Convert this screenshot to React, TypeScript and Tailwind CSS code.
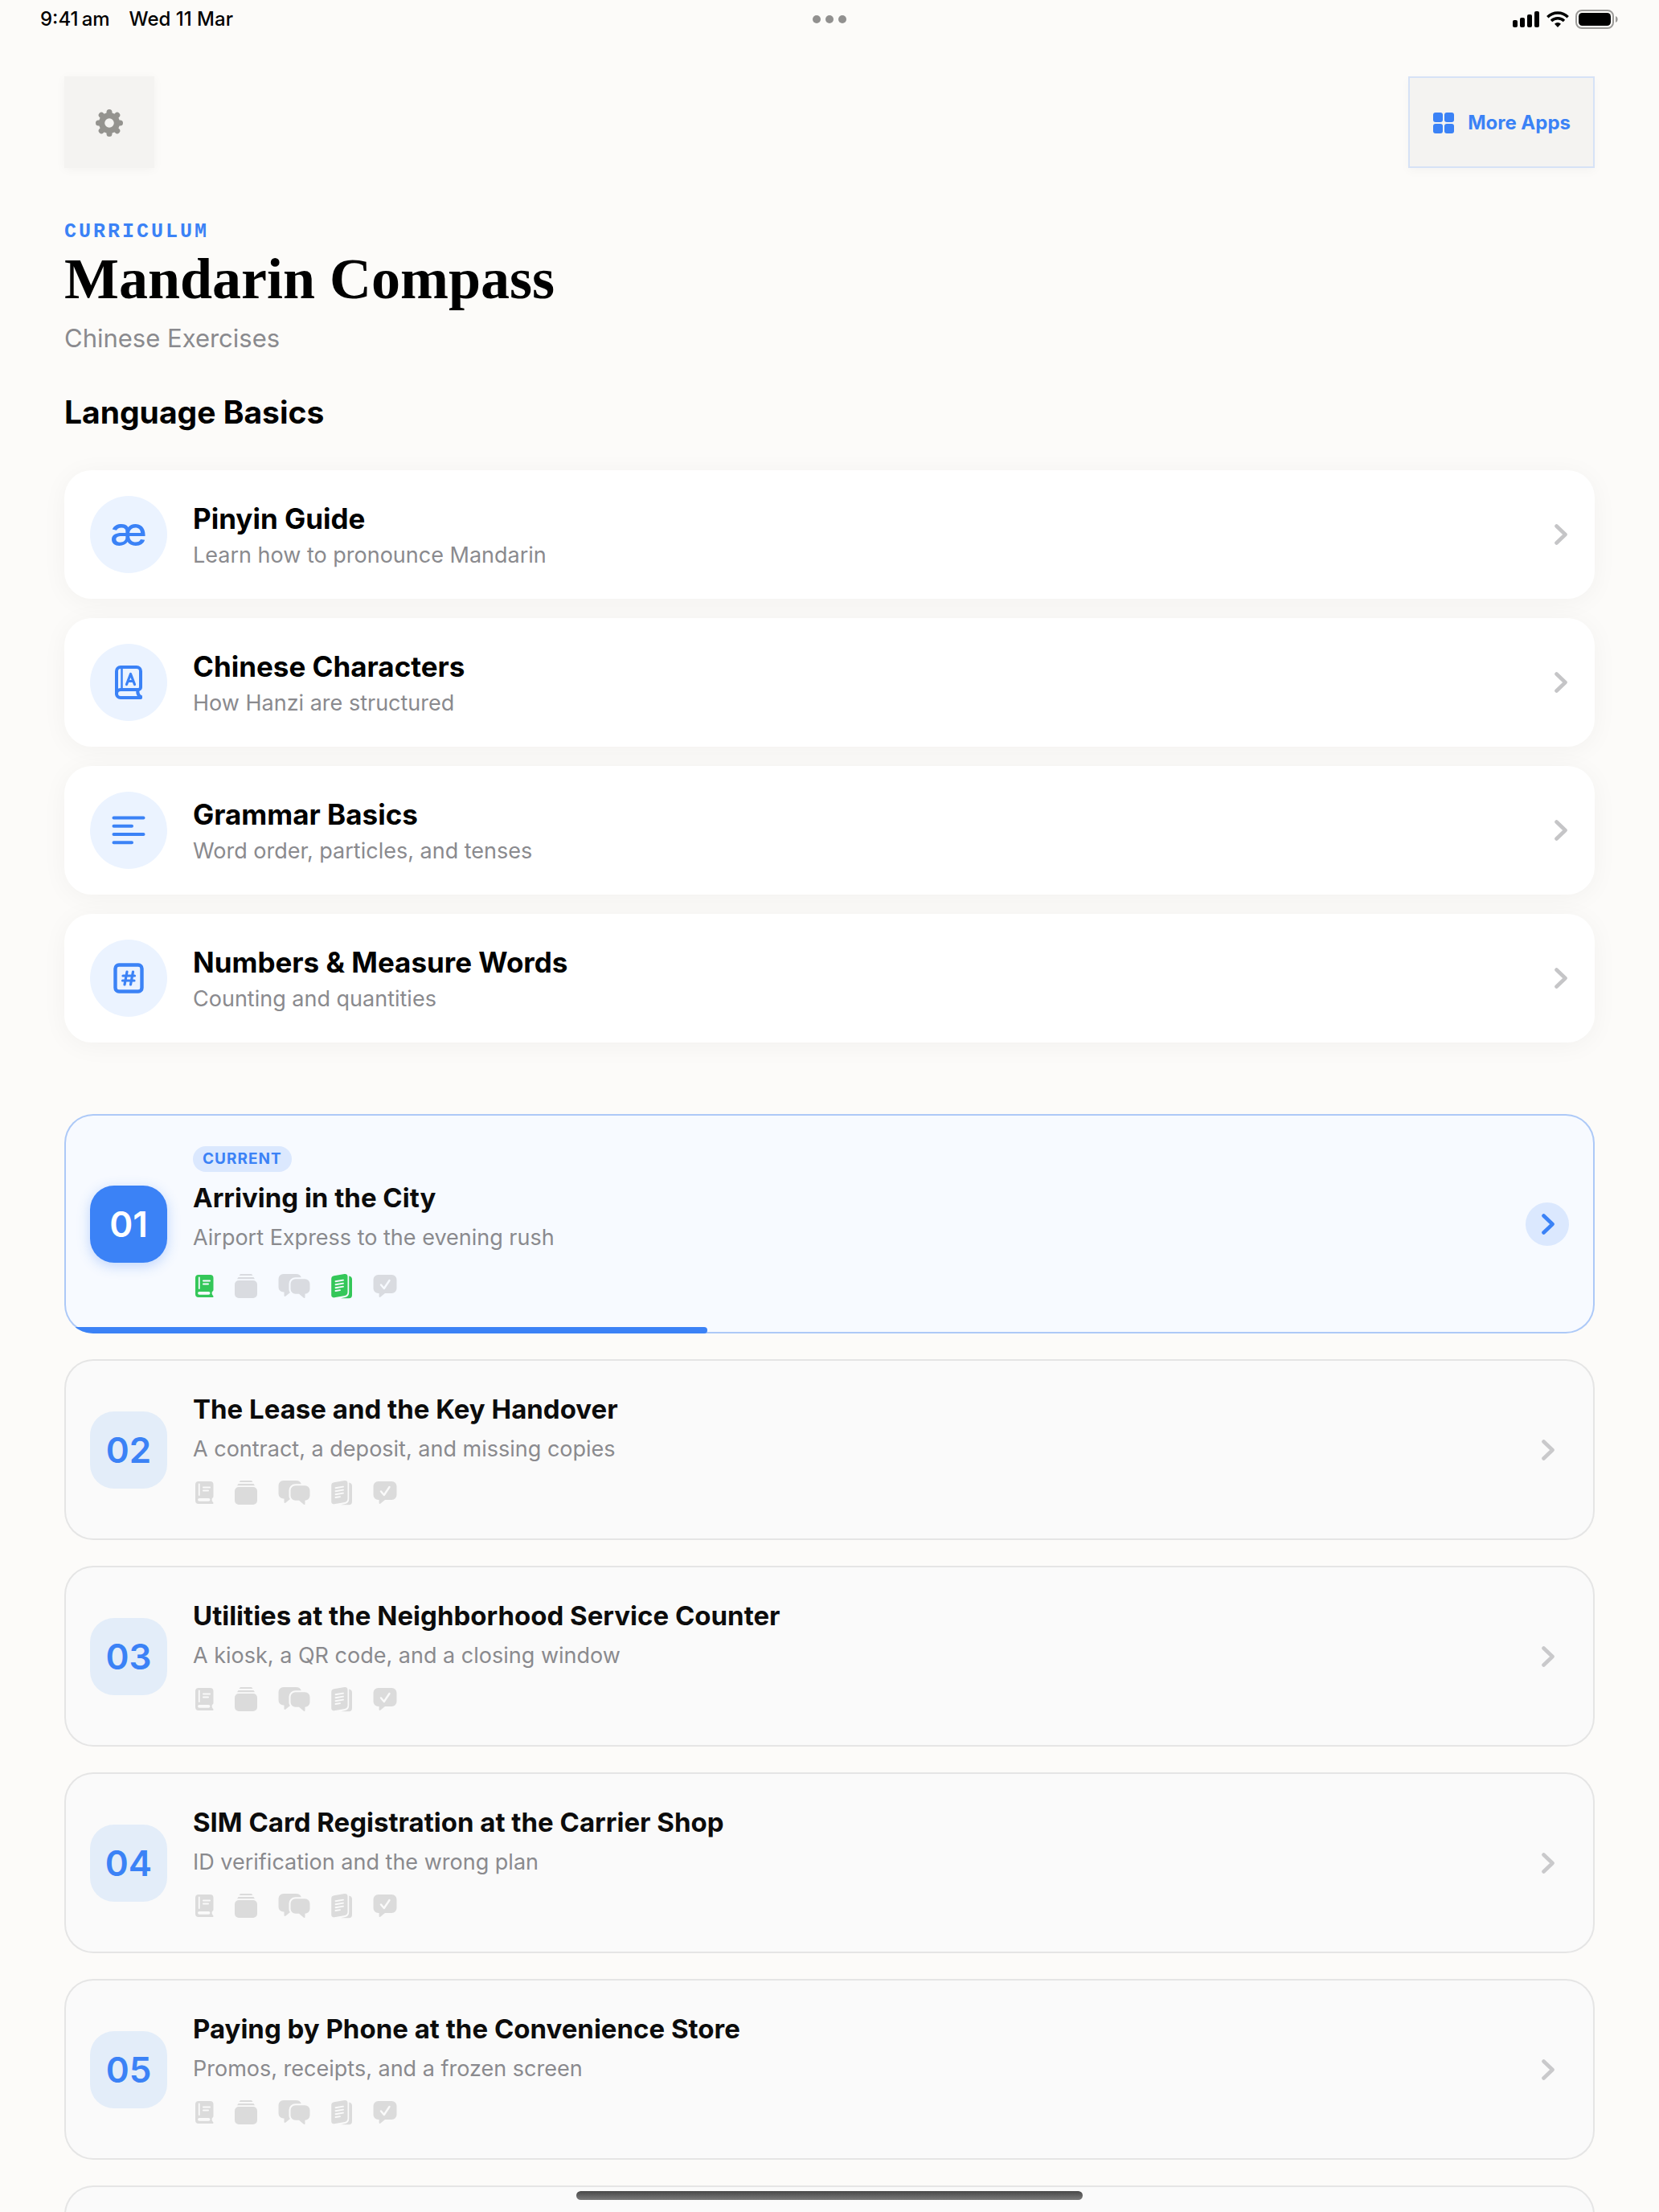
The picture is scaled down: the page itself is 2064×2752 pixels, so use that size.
import type { ReactNode } from 'react'

const basics = [
  { icon: <PhonemeIcon />, title: 'Pinyin Guide', text: 'Learn how to pronounce Mandarin' },
  { icon: <CharacterBookIcon />, title: 'Chinese Characters', text: 'How Hanzi are structured' },
  { icon: <LinesIcon />, title: 'Grammar Basics', text: 'Word order, particles, and tenses' },
  { icon: <NumberIcon />, title: 'Numbers & Measure Words', text: 'Counting and quantities' },
]

type Lesson = {
  number: string
  title: string
  text: string
  progress?: number
  done?: string[]
}

const lessons: Lesson[] = [
  { number: '01', title: 'Arriving in the City', text: 'Airport Express to the evening rush', progress: 42, done: ['book', 'story'] },
  { number: '02', title: 'The Lease and the Key Handover', text: 'A contract, a deposit, and missing copies' },
  { number: '03', title: 'Utilities at the Neighborhood Service Counter', text: 'A kiosk, a QR code, and a closing window' },
  { number: '04', title: 'SIM Card Registration at the Carrier Shop', text: 'ID verification and the wrong plan' },
  { number: '05', title: 'Paying by Phone at the Convenience Store', text: 'Promos, receipts, and a frozen screen' },
]

function PhonemeIcon() {
  return <span className="pb-2 text-[50px] leading-none font-medium">æ</span>
}

function CharacterBookIcon() {
  return (
    <svg width="34" height="42" viewBox="0 0 34 42" fill="none" stroke="currentColor" strokeLinecap="round" strokeLinejoin="round">
      <path d="M32 38.500V40H7a5 5 0 0 1-5-5V7a5 5 0 0 1 5-5h20a5 5 0 0 1 5 5v20a3 3 0 0 1-3 3c-1.500 3-1 6 3 10" strokeWidth="4" />
      <path d="M2 35a5 5 0 0 1 5-5h22" strokeWidth="4" />
      <path d="M8.500 3v26" strokeWidth="2.500" />
      <path d="M14.500 23.500 19.500 10.500 24.500 23.500M16.300 19.500h6.400" strokeWidth="3.200" />
    </svg>
  )
}

function LinesIcon() {
  return (
    <svg width="42" height="36" viewBox="0 0 42 36" fill="none" stroke="currentColor" strokeWidth="4" strokeLinecap="round">
      <path d="M2.500 2.500h37M2.500 12.800h22.500M2.500 23h37M2.500 33.300h22.500" />
    </svg>
  )
}

function NumberIcon() {
  return (
    <svg width="38" height="38" viewBox="0 0 38 38" fill="none" stroke="currentColor" strokeLinecap="round">
      <rect x="2.500" y="2.500" width="33" height="33" rx="4.500" strokeWidth="4.400" />
      <path d="M17 11l-3 16M24.500 11l-3 16M12 16h14.500M11.500 22h14.500" strokeWidth="3.200" />
    </svg>
  )
}

function Chevron({ className = '' }: { className?: string }) {
  return (
    <svg className={className} width="16" height="26" viewBox="0 0 16 26" fill="none" stroke="currentColor" strokeWidth="4.600" strokeLinecap="round" strokeLinejoin="round">
      <path d="M2.500 2.500 13.500 13 2.500 23.500" />
    </svg>
  )
}

/* The cut-out strokes take the colour of the card behind them. */
function LessonIcons({ done, cut }: { done: string[]; cut: string }) {
  const tone = (key: string) => (done.includes(key) ? 'text-[#34c759]' : '')
  return (
    <div className="flex h-8 items-center gap-[26px] pl-0.5 text-black/12">
      <svg className={tone('book')} width="24" height="30" viewBox="0 0 24 30" fill="currentColor">
        <path d="M5 1h14.500A4 4 0 0 1 23.500 5v14.500c0 1-.5 2-1.500 2.500-.8 2-.4 3.500 1.200 5.200.8.800.3 1.800-.7 1.800H5A4 4 0 0 1 1 25V5a4 4 0 0 1 4-4Z" />
        <g className={cut} fill="none" strokeLinecap="round">
          <path d="M5.800 4.500v13.500" strokeWidth="1.800" />
          <path d="M11 8.500h8M11 12.500h6" strokeWidth="2" />
          <path d="M6 23.800h11.500" strokeWidth="3.800" />
        </g>
      </svg>
      <svg width="28" height="30" viewBox="0 0 28 30" fill="currentColor">
        <path d="M7 0h14l1.500 2h-17ZM4.500 4h19l1.500 2.200H3ZM5 8h18a5 5 0 0 1 5 5v12a5 5 0 0 1-5 5H5a5 5 0 0 1-5-5V13a5 5 0 0 1 5-5Z" />
      </svg>
      <svg width="40" height="30" viewBox="0 0 40 30" fill="currentColor">
        <path d="M6.500 0h16c3 0 5.500 1.500 6.300 4.200H21.500a8 8 0 0 0-8 8v6.300c0 2.200.5 3.500 1.500 4.500L9.500 27.500c-1 .8-2 .4-2-.8v-4.200H6.500A6 6 0 0 1 .5 16.500V6a6 6 0 0 1 6-6Z" />
        <path d="M21.500 6.200h12a6 6 0 0 1 6 6v6.600a6 6 0 0 1-6 6v4.200c0 1.200-1 1.400-1.900.6L26 24.800h-4.500a6 6 0 0 1-6-6v-6.600a6 6 0 0 1 6-6Z" />
      </svg>
      <svg className={tone('story')} width="26" height="32" viewBox="0 0 26 32" fill="currentColor">
        <path d="M3.500 3.300 16.500 1c2.200-.4 4 .8 4 3v19.500c0 2.500-1.300 4-3.500 4.500L4 30.300c-2.200.4-3.800-.8-3.800-3V7.300c0-2.200 1.100-3.600 3.300-4Z" />
        <path d="M22.200 3.500c2.300.3 3.800 1.700 3.800 4v19.800c0 2.600-1.300 4-3.800 4H12l5.500-1.300c3-.7 4.700-2.800 4.700-6Z" />
        <g className={cut} fill="none" strokeLinecap="round" strokeWidth="1.900">
          <path d="m5.500 10.200 9.500-1.600M5.500 14.200l9.500-1.600M5.500 18.200l9.500-1.600M5.500 22l5.500-.9" />
        </g>
      </svg>
      <svg width="30" height="28" viewBox="0 0 30 28" fill="currentColor">
        <path d="M6.500 0h17a6 6 0 0 1 6 6v11a6 6 0 0 1-6 6H15l-5.500 4.500c-1 .8-1.900.4-1.900-.8V23H6.500a6 6 0 0 1-6-6V6a6 6 0 0 1 6-6Z" />
        <path className={cut} d="m10 12.500 3.800 4.500L20.500 7" fill="none" strokeWidth="2.400" strokeLinecap="round" strokeLinejoin="round" />
      </svg>
    </div>
  )
}

function StatusBar() {
  return (
    <div className="grid h-12 grid-cols-3 items-center px-[50px]">
      <div className="flex gap-6 text-[24px] font-medium">
        <span>9:41&#8201;am</span>
        <span>Wed 11 Mar</span>
      </div>
      <div className="flex justify-center gap-1.5">
        <span className="size-2.5 rounded-full bg-[#91908f]" />
        <span className="size-2.5 rounded-full bg-[#91908f]" />
        <span className="size-2.5 rounded-full bg-[#91908f]" />
      </div>
      <div className="flex items-center justify-end gap-2">
        <svg width="34" height="20" viewBox="0 0 34 20">
          <rect x="0" y="11" width="6" height="9" rx="2" />
          <rect x="9" y="8" width="6" height="12" rx="2" />
          <rect x="18" y="4" width="6" height="16" rx="2" />
          <rect x="27" y="0" width="6" height="20" rx="2" />
        </svg>
        <svg width="28" height="20" viewBox="0 0 28 20" fill="none" stroke="currentColor" strokeWidth="3.400">
          <path d="M1.300 7.200a18.200 18.200 0 0 1 25.400 0M6 12a11.500 11.500 0 0 1 16 0" />
          <path d="M14 20l-4-4.200a5.600 5.600 0 0 1 8 0Z" fill="currentColor" stroke="none" />
        </svg>
        <svg width="54" height="24" viewBox="0 0 54 24">
          <rect x="1" y="1" width="46" height="22" rx="7" fill="none" stroke="#9b9a98" strokeWidth="2" />
          <rect x="4" y="4" width="40" height="16" rx="4.500" />
          <path d="M50 8c3.500 1.300 3.500 6.700 0 8Z" fill="#9b9a98" />
        </svg>
      </div>
    </div>
  )
}

function BasicCard({ icon, title, text }: { icon: ReactNode; title: string; text: string }) {
  return (
    <a href="#" className="flex items-center gap-8 rounded-[34px] bg-white py-8 pr-[34px] pl-8 shadow-[0_4px_32px_rgba(0,0,0,0.045)]">
      <span className="flex size-24 items-center justify-center rounded-full bg-[#ebf3ff] text-[#3b82f6]">{icon}</span>
      <div className="flex-1 pt-1">
        <h3 className="text-[35px] leading-[44px] font-bold">{title}</h3>
        <p className="mt-1 text-[27px] leading-[40px] text-[#8a8a8e]">{text}</p>
      </div>
      <Chevron className="text-[#c5c5c7]" />
    </a>
  )
}

function LessonCard({ lesson }: { lesson: Lesson }) {
  const current = lesson.progress !== undefined
  return (
    <a
      href="#"
      className={`relative flex items-center gap-8 overflow-hidden rounded-[36px] px-8 py-10 ${
        current ? 'bg-[#f7faff] shadow-[inset_0_0_0_2px_#adc9f7]' : 'bg-[#fafafa] shadow-[inset_0_0_0_2px_#e5e5e5]'
      }`}
    >
      <span
        className={`flex size-24 items-center justify-center rounded-[30px] text-[44px] font-semibold ${
          current ? 'bg-[#3b82f6] text-white shadow-[0_4px_16px_rgba(59,130,246,0.3)]' : 'bg-[#e3edf9] text-[#3b82f6]'
        }`}
      >
        {lesson.number}
      </span>
      <div className="flex-1 pb-[3px]">
        {current && (
          <span className="mb-2.5 flex h-8 w-fit items-center rounded-full bg-[#dbe8fe] px-3 text-[19px] font-bold tracking-[1px] text-[#3b82f6]">
            CURRENT
          </span>
        )}
        <h3 className="text-[33px] leading-[44px] font-bold text-[#0c0c0c]">{lesson.title}</h3>
        <p className={`mt-2 text-[27px] leading-[40px] text-[#8a8a8e] ${current ? 'mb-6' : 'mb-[18px]'}`}>{lesson.text}</p>
        <LessonIcons done={lesson.done ?? []} cut={current ? 'stroke-[#f7faff]' : 'stroke-[#fafafa]'} />
      </div>
      <span className={`flex size-[54px] items-center justify-center rounded-full pl-0.5 ${current ? 'bg-[#dbe8fe] text-[#3b82f6]' : 'text-[#c9c9cb]'}`}>
        <Chevron />
      </span>
      {current && (
        <span className="absolute bottom-0 left-0 h-2 rounded-r-[4px] bg-[#3b82f6]" style={{ width: `${lesson.progress}%` }} />
      )}
    </a>
  )
}

export default function App() {
  return (
    <div className="h-screen overflow-hidden bg-[#fcfbf9] font-['Inter',sans-serif] text-black">
      <StatusBar />
      <main className="px-20 pt-[47px]">
        <div className="flex items-center justify-between">
          <button aria-label="Settings" className="flex h-[114px] w-28 items-center justify-center bg-[#f4f3f1] pt-0.5 text-[#94938f] shadow-[0_2px_12px_rgba(0,0,0,0.04)]">
            <svg width="36" height="36" viewBox="-18 -18 36 36" fill="currentColor">
              <path fillRule="evenodd" d="M0-13A13 13 0 1 1 0 13 13 13 0 0 1 0-13ZM0-5.800A5.800 5.800 0 1 0 0 5.800 5.800 5.800 0 0 0 0-5.800Z" />
              <g stroke="currentColor" strokeWidth="7" strokeLinecap="round">
                <path d="M0-11.500V-13.500M0 11.500V13.500M-11.500 0H-13.500M11.500 0H13.500M8.500-8.500 9.800-9.800M-8.500-8.500-9.800-9.800M8.500 8.500 9.800 9.800M-8.500 8.500-9.800 9.800" />
              </g>
            </svg>
          </button>
          <button className="flex h-[114px] items-center gap-4 border-2 border-[#d6e2f6] bg-[#f4f3f1] px-7 pt-0.5 text-[24px] font-bold text-[#3b82f6] shadow-[0_4px_12px_rgba(0,0,0,0.03)]">
            <svg width="28" height="28" viewBox="0 0 28 28" fill="currentColor">
              <rect x="1" y="1" width="12" height="12" rx="3" />
              <rect x="15" y="1" width="12" height="12" rx="3" />
              <rect x="1" y="15" width="12" height="12" rx="3" />
              <rect x="15" y="15" width="12" height="12" rx="3" />
            </svg>
            More Apps
          </button>
        </div>

        <header className="pt-16">
          <p className="font-['Liberation_Mono',monospace] text-[25px] leading-8 font-bold tracking-[3px] text-[#3b82f6]">CURRICULUM</p>
          <h1 className="font-['Liberation_Serif',serif] text-[72px] leading-[84px] font-bold">Mandarin Compass</h1>
          <p className="mt-3 text-[31px] leading-[40px] text-[#8a8a8e]">Chinese Exercises</p>
        </header>

        <section className="pt-12">
          <h2 className="text-[39px] leading-[48px] font-bold">Language Basics</h2>
          <div className="mt-12 flex flex-col gap-6">
            {basics.map((b) => (
              <BasicCard key={b.title} {...b} />
            ))}
          </div>
        </section>

        <section className="flex flex-col gap-8 pt-[89px]">
          {lessons.map((l) => (
            <LessonCard key={l.number} lesson={l} />
          ))}
          <div className="h-56 rounded-[36px] bg-[#fafafa] shadow-[inset_0_0_0_2px_#e5e5e5]" />
        </section>
      </main>
      <div className="fixed bottom-[15px] left-1/2 h-[11px] w-[630px] -translate-x-1/2 rounded-full bg-linear-to-b from-[#484848] to-[#7c7c7c]" />
    </div>
  )
}
